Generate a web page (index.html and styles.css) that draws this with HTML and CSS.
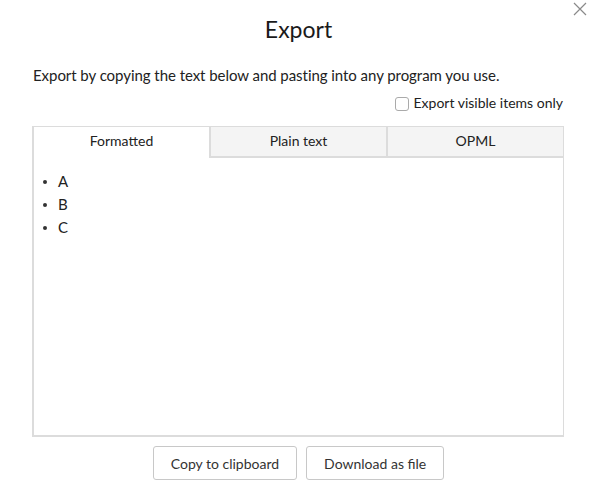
FILE: index.html
```html
<!DOCTYPE html>
<html>
<head>
<meta charset="utf-8">
<link rel="stylesheet" href="styles.css">
</head>
<body>
<div class="dialog">
  <button class="close" aria-label="Close">
    <svg width="14" height="14" viewBox="0 0 14 14"><path d="M1 1L13 13M13 1L1 13" stroke="#8a8a8a" stroke-width="1.2" fill="none"/></svg>
  </button>
  <h1 class="title">Export</h1>
  <p class="desc">Export by copying the text below and pasting into any program you use.</p>
  <label class="visible-only"><span class="checkbox"></span>Export visible items only</label>
  <div class="panel">
    <div class="tabs">
      <div class="tab active">Formatted</div>
      <div class="tab">Plain text</div>
      <div class="tab">OPML</div>
    </div>
    <ul class="content">
      <li>A</li>
      <li>B</li>
      <li>C</li>
    </ul>
  </div>
  <div class="actions">
    <button class="btn">Copy to clipboard</button>
    <button class="btn">Download as file</button>
  </div>
</div>
</body>
</html>
```
FILE: styles.css
```css
html, body {
  margin: 0;
  padding: 0;
  background: #fff;
}
body {
  font-family: Lato, "Open Sans", sans-serif;
  color: #222;
}
.dialog {
  position: relative;
  width: 597px;
  height: 500px;
  box-sizing: border-box;
  padding: 0 33px;
}
.close {
  position: absolute;
  top: 2px;
  right: 10px;
  background: none;
  border: 0;
  padding: 0;
  width: 14px;
  height: 14px;
}
.title {
  margin: 0;
  padding-top: 14px;
  font-size: 23px;
  font-weight: 400;
  text-align: center;
  line-height: 30px;
  color: #1a1a1a;
}
.desc {
  margin: 21px 0 0;
  font-size: 15px;
  letter-spacing: -0.05px;
  line-height: 20px;
}
.visible-only {
  display: flex;
  align-items: center;
  justify-content: flex-end;
  font-size: 14px;
  line-height: 20px;
  margin-top: 8px;
  margin-right: 1px;
}
.checkbox {
  width: 12px;
  height: 12px;
  border: 1px solid #aaa;
  border-radius: 3px;
  margin-right: 5px;
  margin-top: 2px;
}
.panel {
  margin-top: 13px;
  margin-left: -1px;
  height: 311px;
  box-sizing: border-box;
  border: 2px solid #dcdcdc;
  border-top-width: 1px;
  border-right-width: 1px;
  display: flex;
  flex-direction: column;
}
.tabs {
  display: flex;
  height: 31px;
}
.tab {
  flex: 1;
  text-align: center;
  font-size: 14px;
  line-height: 27px;
  background: #f4f4f4;
  border-bottom: 2px solid #dcdcdc;
  border-left: 2px solid #dcdcdc;
  border-top: 1px solid #dcdcdc;
  margin-top: -1px;
}
.tab.active {
  background: #fff;
  border-bottom-color: #fff;
  border-left: 0;
}
.content {
  margin: 0;
  padding: 12px 0 0 9px;
  list-style: none;
  font-size: 15px;
  line-height: 23px;
}
.content li {
  display: flex;
  align-items: center;
}
.content li::before {
  content: "";
  width: 4px;
  height: 4px;
  border-radius: 50%;
  background: #333;
  margin-right: 11px;
  margin-top: 1px;
}
.actions {
  display: flex;
  justify-content: center;
  gap: 9px;
  margin-top: 9px;
}
.btn {
  font-family: inherit;
  font-size: 14px;
  color: #333;
  background: #fff;
  border: 1px solid #c8c8c8;
  border-radius: 3px;
  height: 34px;
  padding: 0 17px;
}
```
